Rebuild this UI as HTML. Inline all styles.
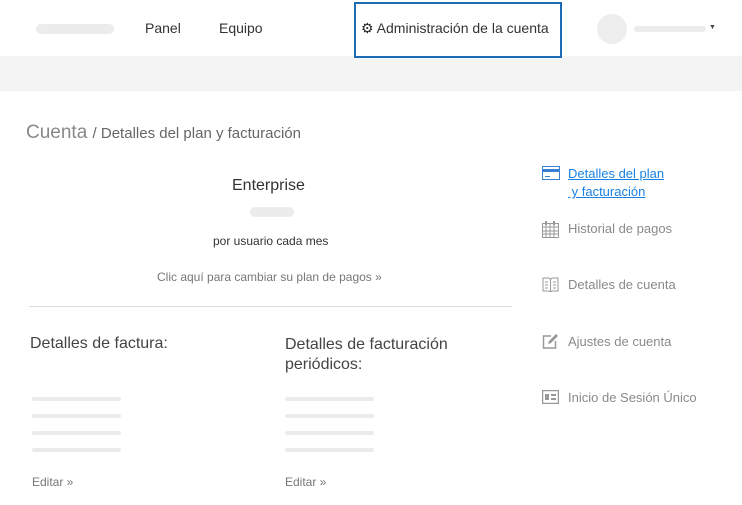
<!DOCTYPE html>
<html><head><meta charset="utf-8"><style>
*{margin:0;padding:0;box-sizing:border-box}
body{width:742px;height:505px;background:#fff;font-family:"Liberation Sans",sans-serif;position:relative;overflow:hidden;color:#444}
.a{position:absolute;white-space:nowrap}
.pill{position:absolute;background:#ececec;border-radius:5px}
.line{position:absolute;background:#ebebeb;height:4px;border-radius:2px}
.side{position:absolute;left:568px;font-size:13px;color:#8a8a8a}
.ic{position:absolute;left:542px}
</style></head><body>
<div class="a" style="left:0;top:56px;width:742px;height:35px;background:#f4f4f4"></div>
<div class="pill" style="left:36px;top:24px;width:78px;height:10px"></div>
<div class="a" style="left:145px;top:20px;font-size:14px;color:#333">Panel</div>
<div class="a" style="left:219px;top:20px;font-size:14px;color:#333">Equipo</div>
<div class="a" style="left:354px;top:2px;width:208px;height:56px;border:2px solid #1d6bb5;z-index:2"></div>
<div class="a" style="left:361px;top:20px;font-size:14px;color:#333"><span style="font-size:14px;color:#222">⚙</span> Administración de la cuenta</div>
<div class="a" style="left:597px;top:14px;width:30px;height:30px;border-radius:50%;background:#eee"></div>
<div class="pill" style="left:634px;top:26px;width:72px;height:6px"></div>
<div class="a" style="left:709px;top:24px;font-size:7px;color:#444">▼</div>
<div class="a" style="left:26px;top:122px;font-size:19px;color:#888">Cuenta <span style="font-size:15px;color:#666">/ Detalles del plan y facturación</span></div>
<div class="a" style="left:232px;top:177px;font-size:16px;color:#333">Enterprise</div>
<div class="pill" style="left:250px;top:207px;width:44px;height:10px"></div>
<div class="a" style="left:213px;top:234px;font-size:12px;color:#333">por usuario cada mes</div>
<div class="a" style="left:157px;top:270px;font-size:12px;color:#777">Clic aquí para cambiar su plan de pagos »</div>
<div class="a" style="left:29px;top:306px;width:483px;height:1px;background:#ddd"></div>
<div class="a" style="left:30px;top:335px;font-size:16px;color:#444">Detalles de factura:</div>
<div class="a" style="left:285px;top:335px;font-size:16px;color:#444;line-height:20px">Detalles de facturación<br>periódicos:</div>
<div class="line" style="left:32px;top:397px;width:89px"></div>
<div class="line" style="left:32px;top:414px;width:89px"></div>
<div class="line" style="left:32px;top:431px;width:89px"></div>
<div class="line" style="left:32px;top:448px;width:89px"></div>
<div class="line" style="left:285px;top:397px;width:89px"></div>
<div class="line" style="left:285px;top:414px;width:89px"></div>
<div class="line" style="left:285px;top:431px;width:89px"></div>
<div class="line" style="left:285px;top:448px;width:89px"></div>
<div class="a" style="left:32px;top:475px;font-size:12px;color:#777">Editar »</div>
<div class="a" style="left:285px;top:475px;font-size:12px;color:#777">Editar »</div>
<svg class="ic" style="top:166px" width="18" height="14"><rect x="0.5" y="0.5" width="17" height="13" fill="#fff" stroke="#3b7fd4"/><rect x="0" y="3" width="18" height="3" fill="#3b7fd4"/><rect x="3" y="10" width="5" height="1" fill="#3b7fd4"/></svg>
<div class="side" style="top:165px;color:#1a82e2;text-decoration:underline;line-height:18px">Detalles del plan<br>&nbsp;y facturación</div>
<svg class="ic" style="top:221px" width="17" height="17"><rect x="0.5" y="2.5" width="16" height="14" fill="none" stroke="#999"/><path d="M0 6h17M0 10h17M0 13h17M4 3v14M8 3v14M12 3v14" stroke="#999"/><rect x="3" y="0" width="2" height="4" fill="#999"/><rect x="11" y="0" width="2" height="4" fill="#999"/></svg>
<div class="side" style="top:221px">Historial de pagos</div>
<svg class="ic" style="top:277px" width="17" height="15"><path d="M1 1h6l1.5 1.5L10 1h6v13h-6l-1.5 1L7 14H1z" fill="none" stroke="#999"/><path d="M8.5 2.5v12M3 5h3M3 8h3M3 11h3M11 5h3M11 8h3M11 11h3" stroke="#999"/></svg>
<div class="side" style="top:277px">Detalles de cuenta</div>
<svg class="ic" style="top:333px" width="17" height="16"><path d="M9 3H1.5v12h12V8" fill="none" stroke="#999" stroke-width="1.5"/><path d="M6 11l1-3 7-7 2 2-7 7z" fill="#999"/></svg>
<div class="side" style="top:334px">Ajustes de cuenta</div>
<svg class="ic" style="top:390px" width="17" height="14"><rect x="0.5" y="0.5" width="16" height="13" fill="none" stroke="#999" stroke-width="1.5"/><rect x="3" y="4" width="4" height="6" fill="#999"/><rect x="9" y="4" width="5" height="2" fill="#999"/><rect x="9" y="8" width="5" height="2" fill="#999"/></svg>
<div class="side" style="top:390px">Inicio de Sesión Único</div>
</body></html>
